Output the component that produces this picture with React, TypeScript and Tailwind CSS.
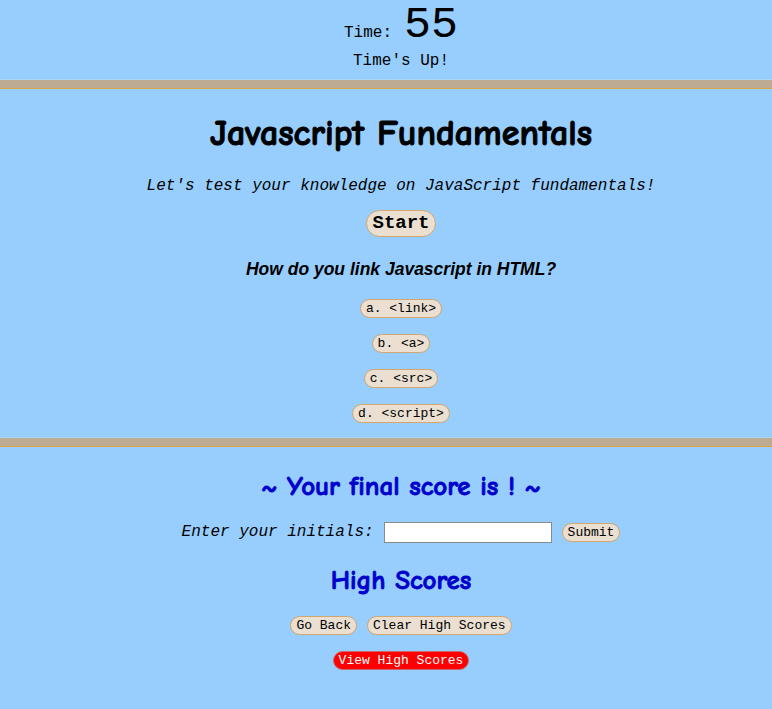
import React from "react";

const comic = "font-['Comic_Sans_MS','Comic_Neue','DejaVu_Sans',sans-serif] font-bold";
const mono = "font-['Liberation_Mono','Courier_New',monospace]";
const pill = `rounded-full border border-[#d2a66c] bg-[#eadfd0] ${mono} text-black leading-none`;

const Bar = () => <div className="h-[10px] w-full border-t border-[#a9d6f0] border-b border-b-[#e0a448] bg-[#bdab94]" />;

const answers = ["a. <link>", "b. <a>", "c. <src>", "d. <script>"];

const App = () => {
  return (
    <div className="min-h-[709px] w-full bg-[#97cefd] text-black">
      <header className={`flex flex-col items-center pl-[30px] pb-[8px] ${mono}`}>
        <div className="flex items-baseline gap-[12px]">
          <span className="text-[16px]">Time:</span>
          <span className="text-[45px] font-light leading-[51px]">55</span>
        </div>
        <p className="text-[16px] leading-[20px]">Time's Up!</p>
      </header>
      <Bar />
      <section className="flex flex-col items-center pl-[30px] pt-[24px] pb-[14px]">
        <h1 className={`${comic} text-[36px] leading-[42px] [-webkit-text-stroke:1px_black]`}>Javascript Fundamentals</h1>
        <p className={`${mono} mt-[19px] text-[16px] italic`}>Let's test your knowledge on JavaScript fundamentals!</p>
        <button className={`${pill} mt-[12px] h-[27px] px-[5px] text-[19px] font-bold`}>Start</button>
        <h2 className="mt-[19px] font-['Liberation_Sans',Arial,sans-serif] text-[17.5px] font-bold italic">How do you link Javascript in HTML?</h2>
        <div className="mt-[17px] flex flex-col items-center gap-[16px]">
          {answers.map((a) => (
            <button key={a} className={`${pill} h-[19px] px-[5px] text-[13px]`}>{a}</button>
          ))}
        </div>
      </section>
      <Bar />
      <section className="flex flex-col items-center pl-[30px] pt-[24px]">
        <h2 className={`${comic} text-[27px] text-[#0000cc] leading-[32px] [-webkit-text-stroke:0.8px_#0000cc]`}>~ Your final score is ! ~</h2>
        <div className="mt-[17px] flex items-center">
          <label className={`${mono} text-[16px] italic`}>Enter your initials:</label>
          <input className="ml-[10px] h-[21px] w-[168px] border border-[#8a8a8a] bg-white" />
          <button className={`${pill} ml-[10px] h-[19px] px-[5px] text-[13px]`}>Submit</button>
        </div>
        <h2 className={`${comic} mt-[21px] text-[27px] text-[#0000cc] leading-[32px] [-webkit-text-stroke:0.8px_#0000cc]`}>High Scores</h2>
        <div className="mt-[19px] flex gap-[10px]">
          <button className={`${pill} h-[19px] px-[5px] text-[13px]`}>Go Back</button>
          <button className={`${pill} h-[19px] px-[5px] text-[13px]`}>Clear High Scores</button>
        </div>
        <button className={`mt-[16px] h-[19px] rounded-full border border-[#c86a6a] bg-[#ff0000] px-[5px] text-[13px] leading-none text-white ${mono}`}>View High Scores</button>
      </section>
    </div>
  );
};

export default App;
